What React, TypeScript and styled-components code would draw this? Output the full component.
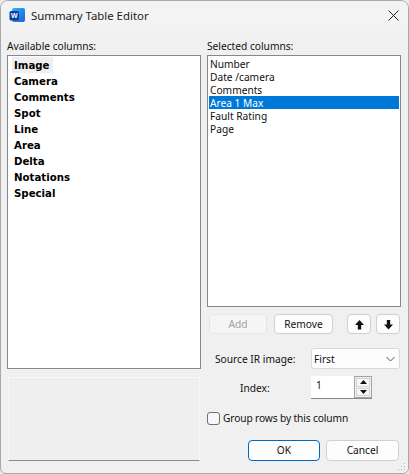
import styled, { createGlobalStyle } from 'styled-components';

const availableColumns = ['Image', 'Camera', 'Comments', 'Spot', 'Line', 'Area', 'Delta', 'Notations', 'Special'];
const selectedColumns = ['Number', 'Date /camera', 'Comments', 'Area 1 Max', 'Fault Rating', 'Page'];

const GlobalStyle = createGlobalStyle`
  html, body {
    margin: 0;
    padding: 0;
    background: #e9e9e9;
  }
  * {
    box-sizing: border-box;
  }
`;

const Dialog = styled.div`
  width: 409px;
  height: 474px;
  display: flex;
  flex-direction: column;
  overflow: hidden;
  position: relative;
  background: #f0f0f0;
  border: 1px solid #a9a9a9;
  border-radius: 8px 8px 6px 6px;
  font-family: 'Noto Sans', 'Open Sans', sans-serif;
  font-size: 10.2px;
  color: #111;
`;

const TitleBar = styled.div`
  height: 30px;
  flex: none;
  display: flex;
  align-items: center;
  padding: 0 3px 2px 8px;
  background: #f3f3f3;
`;

const Title = styled.span`
  margin-left: 6px;
  flex: 1;
  font-size: 11.4px;
  color: #222;
`;

const CloseButton = styled.button`
  width: 24px;
  height: 24px;
  border: 0;
  padding: 0;
  background: none;
  display: flex;
  align-items: center;
  justify-content: center;
`;

const Body = styled.div`
  flex: 1;
  display: grid;
  grid-template-columns: 194px 194px;
  column-gap: 6px;
  padding: 8px 7px 11px 6px;
`;

const LeftColumn = styled.div`
  display: flex;
  flex-direction: column;
`;

const RightColumn = styled.div`
  display: flex;
  flex-direction: column;
`;

const ColumnLabel = styled.div`
  height: 16px;
  line-height: 15px;
`;

const ListBox = styled.ul<{ $height: number }>`
  list-style: none;
  margin: 0;
  padding: 1px;
  height: ${(p) => p.$height}px;
  background: #fff;
  border: 1px solid #828790;
`;

const BoldRow = styled.li<{ $focused?: boolean }>`
  height: 16px;
  line-height: 18px;
  margin-left: 3px;
  padding-left: 2px;
  width: ${(p) => (p.$focused ? '41px' : 'auto')};
  font-family: 'DejaVu Sans', sans-serif;
  font-weight: 700;
  font-size: 10.2px;
  color: #000;
  background: ${(p) => (p.$focused ? '#f0f0f0' : 'transparent')};
`;

const PlainRow = styled.li<{ $selected?: boolean }>`
  height: 13px;
  line-height: 14px;
  padding-left: 1px;
  color: ${(p) => (p.$selected ? '#fff' : '#111')};
  background: ${(p) => (p.$selected ? '#0078d7' : 'transparent')};
`;

const PreviewPanel = styled.div`
  margin: 8px 1px 0;
  height: 84px;
  background: #efefef;
  border: 1px solid #f7f7f7;
  border-bottom: 1px solid #8a8a8a;
`;

const ButtonRow = styled.div`
  display: flex;
  align-items: center;
  margin: 7px 0 0 2px;
`;

const PushButton = styled.button<{ $width: number; $height?: number; $default?: boolean }>`
  width: ${(p) => p.$width}px;
  height: ${(p) => p.$height ?? 20}px;
  padding: 0;
  font-family: inherit;
  font-size: inherit;
  line-height: 1;
  color: #111;
  background: #fdfdfd;
  border: 1px solid ${(p) => (p.$default ? '#0067c0' : '#d0d0d0')};
  border-radius: 4px;
  display: flex;
  align-items: center;
  justify-content: center;

  &:disabled {
    color: #a0a0a0;
    background: #f5f5f5;
    border-color: #e6e6e6;
  }
`;

const RemoveButton = styled(PushButton)`
  margin-left: 7px;
`;

const UpButton = styled(PushButton)`
  margin-left: 14px;
`;

const DownButton = styled(PushButton)`
  margin-left: 5px;
`;

const FormRow = styled.div<{ $top: number; $inset: number }>`
  display: flex;
  align-items: center;
  margin-top: ${(p) => p.$top}px;
  padding-left: ${(p) => p.$inset}px;
`;

const FieldLabel = styled.label<{ $width: number }>`
  width: ${(p) => p.$width}px;
`;

const SelectBox = styled.div`
  width: 89px;
  height: 21px;
  display: flex;
  align-items: center;
  justify-content: space-between;
  padding: 0 4px 0 2px;
  background: #fdfdfd;
  border: 1px solid #d9d9d9;
  border-radius: 3px;
`;

const SpinField = styled.div`
  width: 61px;
  height: 23px;
  display: flex;
  background: #fff;
  border-bottom: 1px solid #8a8a8a;
`;

const SpinValue = styled.div`
  flex: 1;
  padding: 1px 0 0 5px;
  line-height: 17px;
`;

const SpinButtons = styled.div`
  width: 18px;
  display: flex;
  flex-direction: column;
  gap: 1px;
  padding: 1px;
  background: #f0f0f0;
  border: 1px solid #a5a5a5;
  border-bottom: 1px solid #a5a5a5;
`;

const SpinButton = styled.div`
  flex: 1;
  display: flex;
  align-items: center;
  justify-content: center;
  background: #f7f7f7;
  border: 1px solid #d4d4d4;
`;

const CheckRow = styled.div`
  height: 14px;
  display: flex;
  align-items: center;
  margin-top: 12px;
  letter-spacing: -0.12px;
`;

const CheckBox = styled.span`
  width: 13px;
  height: 13px;
  margin-right: 3px;
  background: #f8f8f8;
  border: 1px solid #6f6f6f;
  border-radius: 3px;
`;

const DialogActions = styled.div`
  display: flex;
  gap: 6px;
  margin: 15px 0 0 41px;
`;

const ResizeGrip = styled.svg`
  position: absolute;
  right: 1px;
  bottom: 1px;
`;

const WordIcon = () => (
  <svg width="16" height="16" viewBox="0 0 16 16">
    <defs>
      <linearGradient id="wordBack" x1="0" y1="0" x2="1" y2="1">
        <stop offset="0" stopColor="#2fb6f5" />
        <stop offset="1" stopColor="#1c5fd6" />
      </linearGradient>
    </defs>
    <rect x="3" y="1" width="13" height="14" rx="2" fill="url(#wordBack)" />
    <rect x="0.5" y="4" width="9.5" height="9.5" rx="1.5" fill="#123f9f" />
    <text x="5.2" y="11.2" textAnchor="middle" fontSize="7" fontWeight="700" fill="#fff" fontFamily="'Liberation Sans', sans-serif">W</text>
  </svg>
);

const CloseIcon = () => (
  <svg width="11" height="11" viewBox="0 0 11 11">
    <path d="M0.5 0.5 L10.5 10.5 M10.5 0.5 L0.5 10.5" stroke="#222" strokeWidth="1" fill="none" />
  </svg>
);

const UpArrow = () => (
  <svg width="11" height="11" viewBox="0 0 11 11">
    <path d="M5.5 1 L10 6 H7.2 V10.5 H3.8 V6 H1 Z" fill="#111" />
  </svg>
);

const DownArrow = () => (
  <svg width="11" height="11" viewBox="0 0 11 11">
    <path d="M5.5 10.5 L10 5.5 H7.2 V1 H3.8 V5.5 H1 Z" fill="#111" />
  </svg>
);

const Chevron = () => (
  <svg width="9" height="6" viewBox="0 0 9 6">
    <path d="M0.5 1 L4.5 5 L8.5 1" stroke="#555" strokeWidth="1" fill="none" />
  </svg>
);

const Triangle = ({ down }: { down?: boolean }) => (
  <svg width="7" height="4" viewBox="0 0 7 4">
    <path d={down ? 'M0 0 H7 L3.5 4 Z' : 'M0 4 H7 L3.5 0 Z'} fill="#111" />
  </svg>
);

const App = () => {
  return (
    <>
      <GlobalStyle />
      <Dialog>
        <TitleBar>
          <WordIcon />
          <Title>Summary Table Editor</Title>
          <CloseButton>
            <CloseIcon />
          </CloseButton>
        </TitleBar>
        <Body>
          <LeftColumn>
            <ColumnLabel>Available columns:</ColumnLabel>
            <ListBox $height={314}>
              {availableColumns.map((name, i) => (
                <BoldRow key={name} $focused={i === 0}>
                  {name}
                </BoldRow>
              ))}
            </ListBox>
            <PreviewPanel />
          </LeftColumn>
          <RightColumn>
            <ColumnLabel>Selected columns:</ColumnLabel>
            <ListBox $height={252}>
              {selectedColumns.map((name) => (
                <PlainRow key={name} $selected={name === 'Area 1 Max'}>
                  {name}
                </PlainRow>
              ))}
            </ListBox>
            <ButtonRow>
              <PushButton $width={58} disabled>
                Add
              </PushButton>
              <RemoveButton $width={59}>Remove</RemoveButton>
              <UpButton $width={24}>
                <UpArrow />
              </UpButton>
              <DownButton $width={24}>
                <DownArrow />
              </DownButton>
            </ButtonRow>
            <FormRow $top={14} $inset={8}>
              <FieldLabel $width={96}>Source IR image:</FieldLabel>
              <SelectBox>
                First
                <Chevron />
              </SelectBox>
            </FormRow>
            <FormRow $top={7} $inset={33}>
              <FieldLabel $width={71}>Index:</FieldLabel>
              <SpinField>
                <SpinValue>1</SpinValue>
                <SpinButtons>
                  <SpinButton>
                    <Triangle />
                  </SpinButton>
                  <SpinButton>
                    <Triangle down />
                  </SpinButton>
                </SpinButtons>
              </SpinField>
            </FormRow>
            <CheckRow>
              <CheckBox />
              Group rows by this column
            </CheckRow>
            <DialogActions>
              <PushButton $width={72} $height={21} $default>
                OK
              </PushButton>
              <PushButton $width={73} $height={21}>
                Cancel
              </PushButton>
            </DialogActions>
          </RightColumn>
        </Body>
        <ResizeGrip width="10" height="10" viewBox="0 0 10 10">
          <path d="M7 1h1v1H7z M4 4h1v1H4z M7 4h1v1H7z M1 7h1v1H1z M4 7h1v1H4z M7 7h1v1H7z" fill="#b5b5b5" />
        </ResizeGrip>
      </Dialog>
    </>
  );
};

export default App;
